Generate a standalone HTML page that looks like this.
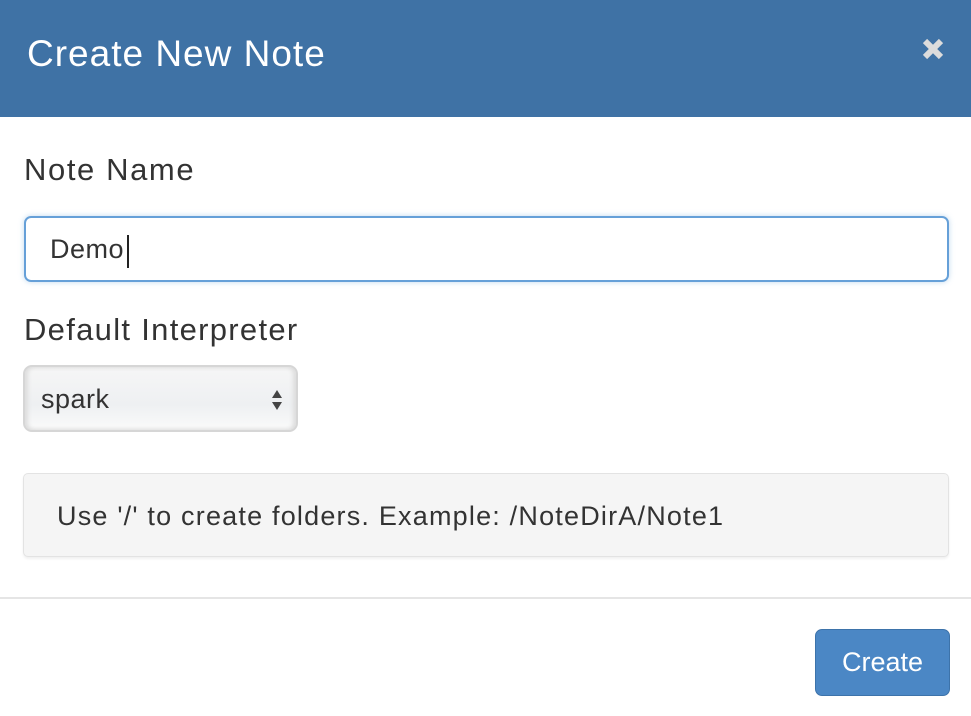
<!DOCTYPE html>
<html><head><meta charset="utf-8"><style>
*{margin:0;padding:0;box-sizing:border-box}
body{width:971px;height:716px;background:#fff;font-family:"Liberation Sans",Arial,sans-serif;color:#333;position:relative;overflow:hidden}
.hdr{position:absolute;left:0;top:0;width:971px;height:117px;background:#3f72a5}
.title{position:absolute;left:27px;top:33px;font-size:37px;letter-spacing:1px;color:#fff;white-space:nowrap}
.x{position:absolute;left:921px;top:37px}
.lbl{position:absolute;left:24px;font-size:31px;color:#333;white-space:nowrap}
.inp{position:absolute;left:24px;top:216px;width:925px;height:66px;border:2px solid #66a0d8;border-radius:7px;box-shadow:0 0 6px rgba(102,160,216,.4)}
.inp span{position:absolute;left:24px;top:16px;font-size:27px;letter-spacing:0.5px;color:#333}
.inp i{position:absolute;left:101px;top:17px;width:2px;height:33px;background:#222}
.sel{position:absolute;left:23px;top:365px;width:275px;height:67px;border:2px solid #d6d6d6;border-radius:9px;background:linear-gradient(#f6f6f6,#eef0f2 60%,#fafafa);box-shadow:inset 3px 0 4px #ddd,inset -3px 0 4px #ddd}
.sel span{position:absolute;left:16px;top:17px;font-size:27px;letter-spacing:0.5px;color:#333}
.well{position:absolute;left:23px;top:473px;width:926px;height:84px;background:#f5f5f5;border:1px solid #e3e3e3;border-radius:5px;box-shadow:0 2px 2px rgba(0,0,0,.06)}
.well span{position:absolute;left:33px;top:27px;font-size:27px;letter-spacing:1.2px;color:#333;white-space:nowrap}
.hr{position:absolute;left:0;top:597px;width:971px;height:2px;background:#e5e5e5}
.btn{position:absolute;left:815px;top:629px;width:135px;height:67px;background:#4b87c5;border:1px solid #3d73aa;border-radius:7px;color:#fff;font-size:27px;text-align:center;line-height:65px}
</style></head><body>
<div class="hdr"><div class="title">Create New Note</div>
<svg class="x" width="24" height="24" viewBox="0 0 24 24"><path d="M4 4L20 20M20 4L4 20" stroke="#dcdcdc" stroke-width="6"/></svg></div>
<div class="lbl" style="top:152px;letter-spacing:1.6px">Note Name</div>
<div class="inp"><span>Demo</span><i></i></div>
<div class="lbl" style="top:312px;letter-spacing:1.3px">Default Interpreter</div>
<div class="sel"><span>spark</span>
<svg style="position:absolute;left:246px;top:22px" width="12" height="22" viewBox="0 0 12 22"><path d="M6 1L11 9H1Z M6 21L11 13H1Z" fill="#444"/></svg></div>
<div class="well"><span>Use '/' to create folders. Example: /NoteDirA/Note1</span></div>
<div class="hr"></div>
<div class="btn">Create</div>
</body></html>
